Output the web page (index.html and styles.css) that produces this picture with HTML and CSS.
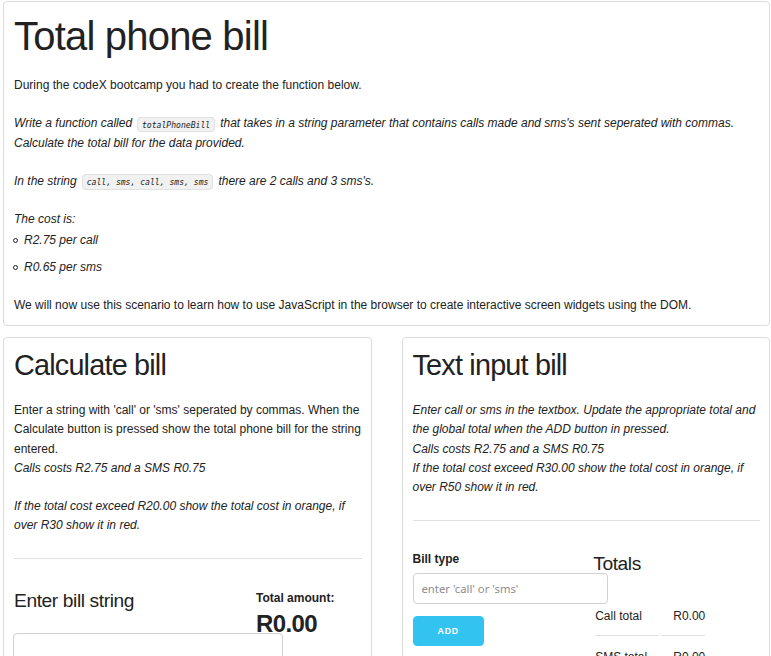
FILE: index.html
```html
<!DOCTYPE html>
<html lang="en">
<head>
<meta charset="utf-8">
<title>Total phone bill</title>
<link rel="stylesheet" href="styles.css">
</head>
<body>
<div class="page">
  <section class="card intro">
    <h1 class="title">Total phone bill</h1>
    <p>During the codeX bootcamp you had to create the function below.</p>
    <p class="it">Write a function called <code>totalPhoneBill</code> that takes in a string parameter that contains calls made and sms's sent seperated with commas. Calculate the total bill for the data provided.</p>
    <p class="it">In the string <code>call, sms, call, sms, sms</code> there are 2 calls and 3 sms's.</p>
    <p class="it cost">The cost is:</p>
    <ul class="it costs">
      <li>R2.75 per call</li>
      <li>R0.65 per sms</li>
    </ul>
    <p class="last">We will now use this scenario to learn how to use JavaScript in the browser to create interactive screen widgets using the DOM.</p>
  </section>

  <div class="widgets">
    <section class="card widget">
      <h3 class="card-title">Calculate bill</h3>
      <p class="desc">Enter a string with 'call' or 'sms' seperated by commas. When the Calculate button is pressed show the total phone bill for the string entered.<br><em>Calls costs R2.75 and a SMS R0.75</em><br><br><em>If the total cost exceed R20.00 show the total cost in orange, if over R30 show it in red.</em></p>
      <hr class="rule">
      <div class="split split-wide">
        <div class="col">
          <h5 class="sub sub-bill">Enter bill string</h5>
          <textarea class="bill-string"></textarea>
        </div>
        <div class="col">
          <label class="lbl lbl-amount">Total amount:</label>
          <div class="amount">R0.00</div>
        </div>
      </div>
    </section>

    <section class="card widget">
      <h3 class="card-title">Text input bill</h3>
      <p class="desc"><em>Enter call or sms in the textbox. Update the appropriate total and the global total when the ADD button in pressed.<br>Calls costs R2.75 and a SMS R0.75<br>If the total cost exceed R30.00 show the total cost in orange, if over R50 show it in red.</em></p>
      <hr class="rule">
      <div class="split split-half">
        <div class="col">
          <label class="lbl" for="billType">Bill type</label>
          <input class="bill-type" id="billType" type="text" placeholder="enter 'call' or 'sms'">
          <button class="add-btn" type="button">Add</button>
        </div>
        <div class="col">
          <h5 class="sub">Totals</h5>
          <table class="totals">
            <tr><td>Call total</td><td>R0.00</td></tr>
            <tr><td>SMS total</td><td>R0.00</td></tr>
            <tr><td>Total</td><td>R0.00</td></tr>
          </table>
        </div>
      </div>
    </section>
  </div>
</div>
</body>
</html>
```

FILE: styles.css
```css
html, body {
  margin: 0;
  padding: 0;
  background: #fff;
}

body {
  font-family: "Liberation Sans", Arial, Helvetica, sans-serif;
  font-size: 12px;
  line-height: 1.6;
  color: #222;
}

.page {
  padding: 1px 1px 0 3px;
}

.card {
  border: 1px solid #dcdcdc;
  border-radius: 4px;
  padding: 10px;
  box-sizing: border-box;
  min-width: 0;
}

.widget {
  padding-right: 9px;
}

.title {
  font-size: 40px;
  font-weight: normal;
  letter-spacing: -0.8px;
  line-height: 1.2;
  margin: 0 0 16px;
}

p {
  margin: 0 0 19.2px;
}

.it {
  font-style: italic;
}

.cost {
  margin-bottom: 1.8px;
}

.costs {
  list-style: none;
  margin: 0 0 18px;
  padding: 0;
}

.costs li {
  margin-bottom: 8px;
}

.costs li::before {
  content: "";
  display: inline-block;
  width: 3px;
  height: 3px;
  border: 1px solid #222;
  border-radius: 50%;
  margin: 0 6px 2px -1px;
  vertical-align: middle;
}

.last {
  margin-bottom: 0;
}

code {
  font-family: "DejaVu Sans Mono", monospace;
  font-size: 8.1px;
  padding: 1.6px 4px;
  margin: 0 1.6px;
  white-space: nowrap;
  background: #f1f1f1;
  border: 1px solid #e1e1e1;
  border-radius: 4px;
}

.widgets {
  display: grid;
  grid-template-columns: 1fr 1fr;
  column-gap: 30px;
  margin-top: 11px;
}

.card-title {
  font-size: 28.8px;
  font-weight: normal;
  letter-spacing: -0.8px;
  line-height: 1.3;
  margin: -1px 0 17px;
}

.desc {
  margin: 0;
}

.rule {
  border: 0;
  border-top: 1px solid #e1e1e1;
  margin: 22.5px 0 29.5px;
}

.split {
  display: grid;
}

.split-wide {
  grid-template-columns: 228px 1fr;
  column-gap: 14px;
}

.split-half {
  grid-template-columns: 48% 48%;
  column-gap: 4%;
}

.sub {
  font-size: 19.2px;
  font-weight: normal;
  letter-spacing: -0.4px;
  line-height: 1.5;
  margin: 0 0 16px;
}

.sub-bill {
  margin: -2px 0 18px;
}

.lbl {
  display: block;
  font-weight: bold;
  margin-bottom: 4px;
}

.lbl-amount {
  margin-bottom: 2px;
}

.amount {
  font-size: 24px;
  font-weight: bold;
  letter-spacing: -0.64px;
  line-height: 1.2;
}

.bill-string {
  display: block;
  width: 270px;
  min-height: 52px;
  margin: 2px 0 12px -1px;
  padding: 5px 8px;
  border: 1px solid #d1d1d1;
  border-radius: 4px;
  box-sizing: border-box;
  resize: none;
}

.bill-type {
  display: block;
  width: 195px;
  height: 30.4px;
  margin: 0 0 12px;
  padding: 5px 8px;
  border: 1px solid #d1d1d1;
  border-radius: 4px;
  box-sizing: border-box;
  font-family: "Noto Sans", "Open Sans", sans-serif;
  font-size: 11.3px;
  color: #333;
  background: #fff;
}

.bill-type::placeholder {
  color: #8e8e8e;
}

.add-btn {
  display: block;
  height: 30.4px;
  padding: 0 24px;
  border: 1px solid #33c3f0;
  border-radius: 4px;
  background: #33c3f0;
  color: #fff;
  font-family: "Liberation Sans", Arial, sans-serif;
  font-size: 8.8px;
  font-weight: bold;
  letter-spacing: 0.8px;
  text-transform: uppercase;
  line-height: 28px;
}

.totals {
  border-spacing: 2px;
}

.totals td {
  padding: 9.6px 12px;
  border-bottom: 1px solid #e1e1e1;
  text-align: left;
  line-height: 19.2px;
}

.totals td:first-child {
  padding-left: 0;
}

.totals td:last-child {
  padding-right: 0;
}
```
